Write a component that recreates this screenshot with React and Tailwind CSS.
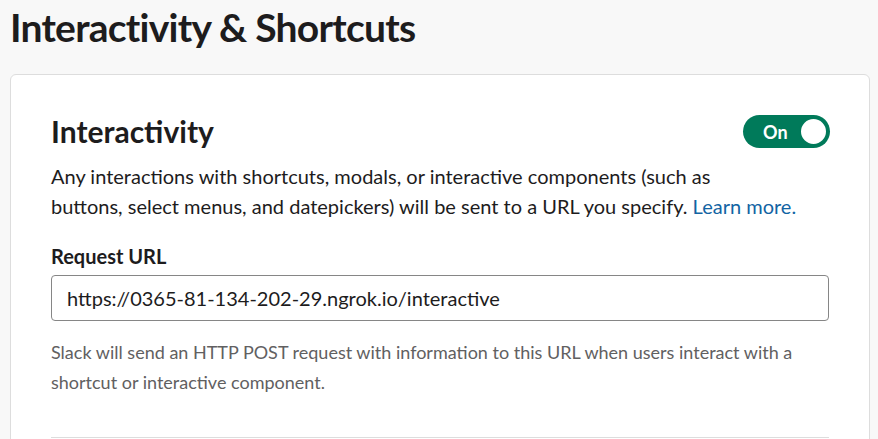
export default function App() {
  return (
    <div className="min-h-screen bg-[#f8f8f8] text-[#1d1c1d]" style={{ fontFamily: "Lato, 'Noto Sans', sans-serif" }}>
      <div className="w-[878px] h-[439px] overflow-hidden px-[10px] pt-[2px]">
        <h1 className="text-[39px] leading-[50px] font-bold tracking-[-0.75px]">Interactivity &amp; Shortcuts</h1>
        <div className="mt-[22px] w-[860px] rounded-[6px] border border-[#dddddd] bg-white px-[40px] pt-[38px]">
          <div className="flex items-center justify-between h-[36px]">
            <h2 className="text-[30px] leading-[36px] font-bold">Interactivity</h2>
            <div className="flex items-center h-[33px] w-[87px] rounded-full bg-[#007a5a] pl-[20px] pr-[2px] mr-[-1px] mt-[1px]">
              <span className="text-white text-[18px] font-bold leading-none">On</span>
              <span className="ml-auto h-[29px] w-[29px] rounded-full bg-white border-2 border-[#007a5a] box-border" />
            </div>
          </div>
          <p className="mt-[12px] text-[20px] leading-[30px] whitespace-nowrap">
            Any interactions with shortcuts, modals, or interactive components (such as
            <br />
            buttons, select menus, and datepickers) will be sent to a URL you specify.{" "}
            <a className="text-[#1264a3]">Learn more.</a>
          </p>
          <div className="mt-[23px] text-[20px] leading-[24px] font-bold">Request URL</div>
          <div className="mt-[7px] h-[46px] rounded-[4px] border border-[#868686] flex items-center px-[15px] text-[20px]">
            https://0365-81-134-202-29.ngrok.io/interactive
          </div>
          <p className="mt-[16px] text-[18px] leading-[30px] text-[#616061] whitespace-nowrap">
            Slack will send an HTTP POST request with information to this URL when users interact with a
            <br />
            shortcut or interactive component.
          </p>
          <div className="mt-[40px] h-px bg-[#dddddd]" />
          <div className="h-[40px]" />
        </div>
      </div>
    </div>
  );
}
